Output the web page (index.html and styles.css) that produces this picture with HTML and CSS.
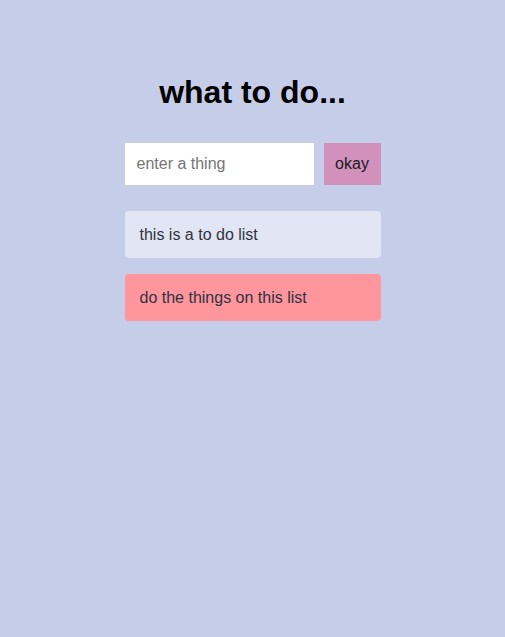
FILE: index.html
```html
<!DOCTYPE html>
<html>
<head>
<meta charset="utf-8">
<link rel="stylesheet" href="styles.css">
</head>
<body>
<main class="app">
  <h1 class="title">what to do...</h1>
  <form class="entry">
    <input class="entry-input" type="text" placeholder="enter a thing">
    <button class="entry-button" type="button">okay</button>
  </form>
  <ul class="list">
    <li class="item item-plain">this is a to do list</li>
    <li class="item item-pink">do the things on this list</li>
  </ul>
</main>
</body>
</html>
```
FILE: styles.css
```css
html, body {
  margin: 0;
  padding: 0;
  background: #c6cde9;
  font-family: "Liberation Sans", Arial, sans-serif;
}
body {
  min-height: 637px;
}
.app {
  width: 256px;
  margin: 0 auto;
  padding-top: 74px;
  display: flex;
  flex-direction: column;
}
.title {
  margin: 0 0 32px;
  font-size: 32px;
  line-height: 37px;
  font-weight: bold;
  text-align: center;
  color: #000;
}
.entry {
  display: flex;
  gap: 10px;
  margin: 0 0 26px;
}
.entry-input {
  box-sizing: border-box;
  width: 189px;
  height: 42px;
  border: none;
  outline: none;
  padding: 0 12px;
  font-family: inherit;
  font-size: 16px;
  background: #fff;
  color: #333;
}
.entry-input::placeholder {
  color: #757575;
}
.entry-button {
  box-sizing: border-box;
  width: 57px;
  height: 42px;
  border: none;
  padding: 0;
  background: #d291bc;
  font-family: inherit;
  font-size: 16px;
  color: #1a1a1a;
}
.list {
  list-style: none;
  margin: 0;
  padding: 0;
  display: flex;
  flex-direction: column;
  gap: 16px;
}
.item {
  padding: 15px;
  line-height: 17px;
  font-size: 16px;
  color: #2f3340;
  border-radius: 4px;
}
.item-plain {
  background: #e2e6f4;
}
.item-pink {
  background: #ff959d;
}
```
